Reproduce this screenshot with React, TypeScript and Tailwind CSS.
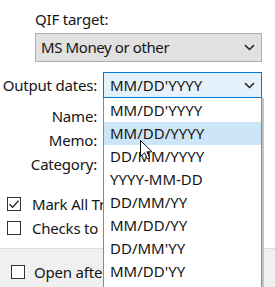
import React from "react";

const Chevron = () => (
  <svg width="11" height="7" viewBox="0 0 11 7" className="shrink-0">
    <path d="M1 1.2 L5.5 5.5 L10 1.2" fill="none" stroke="#2b2b2b" strokeWidth="1.6" />
  </svg>
);

const Box = ({ checked = false }: { checked?: boolean }) => (
  <div className="w-[14px] h-[14px] border border-[#333] bg-white flex items-center justify-center shrink-0">
    {checked && (
      <svg width="12" height="12" viewBox="0 0 12 12">
        <path d="M1.5 6.2 L4.6 9.2 L10.6 2.6" fill="none" stroke="#222" strokeWidth="1.4" />
      </svg>
    )}
  </div>
);

const items = [
  "MM/DD'YYYY",
  "MM/DD/YYYY",
  "DD/MM/YYYY",
  "YYYY-MM-DD",
  "DD/MM/YY",
  "MM/DD/YY",
  "DD/MM'YY",
  "MM/DD'YY",
];

export default function App() {
  return (
    <div className="w-[275px] h-[287px] overflow-hidden relative bg-white text-[15px] text-[#151515] font-['Noto_Sans',sans-serif]">
      <div className="flex flex-col h-full">
        <div className="pl-[35px] pr-[13px] pt-[8px]">
          <div className="h-[22px] leading-[22px] tracking-[-0.2px]">QIF target:</div>
          <div className="mt-[3px] h-[29px] border border-[#adadad] bg-[#e1e1e1] flex items-center justify-between pl-[5px] pr-[6px]">
            <span className="tracking-[-0.4px]">MS Money or other</span>
            <Chevron />
          </div>
        </div>
        <div className="mt-[10px] flex items-center pr-[13px]">
          <div className="w-[97px] text-right leading-[26px] tracking-[-0.2px]">Output dates:</div>
          <div className="ml-[6px] flex-1 h-[26px] border border-[#0078d7] bg-[#e5f1fb] flex items-center justify-between pl-[6px] pr-[6px]">
            <span>MM/DD'YYYY</span>
            <Chevron />
          </div>
        </div>
        <div className="mt-[6px] flex flex-col tracking-[-0.2px]">
          <div className="w-[97px] text-right h-[24px] leading-[24px]">Name:</div>
          <div className="w-[97px] text-right h-[24px] leading-[24px]">Memo:</div>
          <div className="w-[97px] text-right h-[24px] leading-[24px]">Category:</div>
        </div>
        <div className="mt-[16px] flex flex-col pl-[7px] w-[103px] overflow-hidden tracking-[-0.2px]">
          <div className="h-[24px] flex items-center gap-[11px] whitespace-nowrap">
            <Box checked />
            <span>Mark All Tra</span>
          </div>
          <div className="h-[24px] flex items-center gap-[11px] whitespace-nowrap">
            <Box />
            <span>Checks to p</span>
          </div>
        </div>
        <div className="mt-[8px] flex-1 border-t border-[#dcdcdc] bg-[#f0f0f0] pt-[11px] pl-[11px]">
          <div className="h-[24px] w-[92px] overflow-hidden flex items-center gap-[9px] whitespace-nowrap tracking-[-0.2px]">
            <Box />
            <span>Open after</span>
          </div>
        </div>
      </div>

      <div className="absolute left-[103px] top-[98px] w-[159px] h-[200px] bg-white border-l border-r border-[#8a8a8a] shadow-[2px_0_0_#c4c4c4] pt-[1px]">
        {items.map((it, i) => (
          <div
            key={it}
            className={`h-[23px] leading-[23px] pl-[6px] ${i === 1 ? "bg-[#cde6f7]" : ""}`}
          >
            {it}
          </div>
        ))}
      </div>

      <svg
        className="absolute left-[140px] top-[140px]"
        width="13"
        height="20"
        viewBox="0 0 13 20"
      >
        <path
          d="M0.5 0.5 L0.5 16.5 L4.5 12.7 L7.3 18.8 L9.6 17.8 L6.9 11.8 L12 11.8 Z"
          fill="#fff"
          stroke="#111"
          strokeWidth="1"
          strokeLinejoin="miter"
        />
      </svg>
    </div>
  );
}
